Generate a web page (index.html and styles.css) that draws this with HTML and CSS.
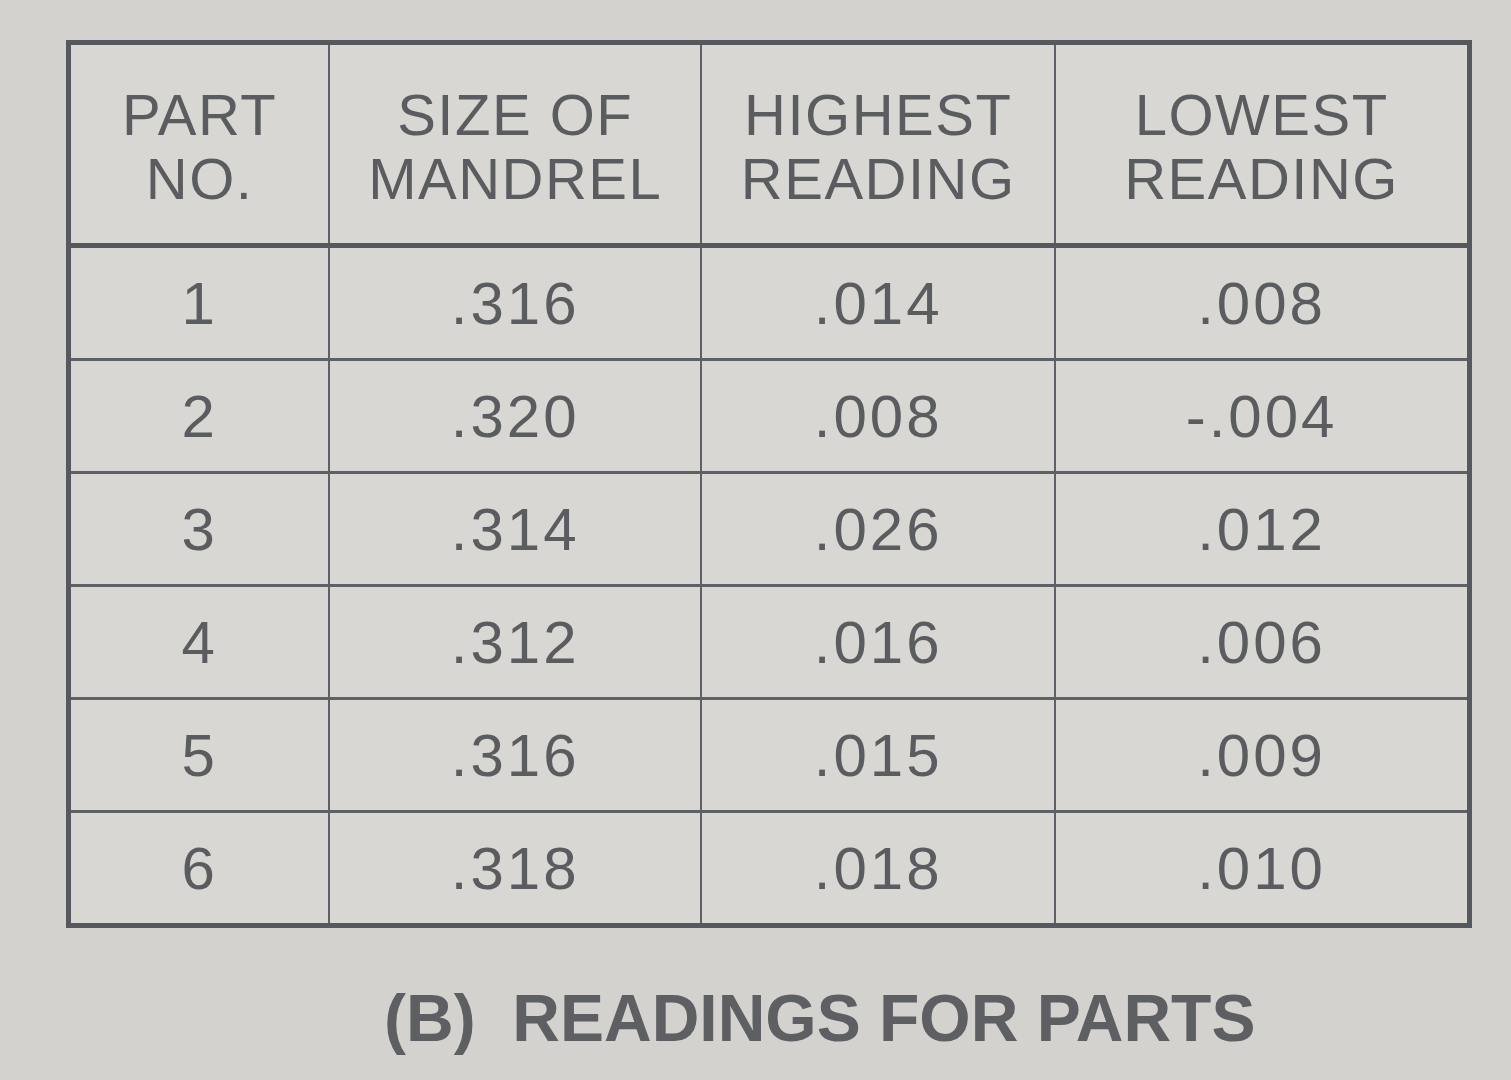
FILE: index.html
```html
<!DOCTYPE html>
<html lang="en">
<head>
<meta charset="utf-8">
<title>Readings for Parts</title>
<link rel="stylesheet" href="styles.css">
</head>
<body>
<main class="page">
  <table class="readings">
    <colgroup>
      <col class="c1"><col class="c2"><col class="c3"><col class="c4">
    </colgroup>
    <thead>
      <tr>
        <th>PART<br>NO.</th>
        <th>SIZE OF<br>MANDREL</th>
        <th>HIGHEST<br>READING</th>
        <th>LOWEST<br>READING</th>
      </tr>
    </thead>
    <tbody>
      <tr><td>1</td><td>.316</td><td>.014</td><td>.008</td></tr>
      <tr><td>2</td><td>.320</td><td>.008</td><td>-.004</td></tr>
      <tr><td>3</td><td>.314</td><td>.026</td><td>.012</td></tr>
      <tr><td>4</td><td>.312</td><td>.016</td><td>.006</td></tr>
      <tr><td>5</td><td>.316</td><td>.015</td><td>.009</td></tr>
      <tr><td>6</td><td>.318</td><td>.018</td><td>.010</td></tr>
    </tbody>
  </table>
  <p class="caption">(B)&nbsp; READINGS FOR PARTS</p>
</main>
</body>
</html>
```
FILE: styles.css
```css
html, body {
  margin: 0;
  padding: 0;
  background: #d3d2cf;
}
body {
  font-family: "Liberation Sans", Arial, sans-serif;
  color: #5a5c5f;
  width: 1511px;
  height: 1080px;
  overflow: hidden;
}
.page {
  padding: 40px 0 0 66px;
}
.readings {
  width: 1406px;
  border-collapse: collapse;
  border: 5px solid #55595e;
  background: #d8d7d4;
}
.readings .c1 { width: 262px; }
.readings .c2 { width: 373px; }
.readings .c3 { width: 355px; }
.readings .c4 { width: 416px; }
.readings th {
  height: 192px;
  font-weight: normal;
  font-size: 58px;
  line-height: 64px;
  letter-spacing: 1.5px;
  border-left: 2px solid #5d6166;
  border-bottom: 5px solid #55595e;
  text-align: center;
  vertical-align: middle;
  padding: 6px 0 0;
}
.readings td {
  height: 110px;
  font-size: 60px;
  letter-spacing: 3px;
  text-align: center;
  vertical-align: middle;
  border-left: 2px solid #5d6166;
  border-top: 3px solid #5d6166;
  padding: 0;
}
.readings th:first-child,
.readings td:first-child {
  border-left: none;
}
.readings tbody tr:first-child td {
  border-top: none;
}
.caption {
  margin: 52px 0 0 318px;
  font-size: 66px;
  font-weight: bold;
  letter-spacing: 0;
  color: #5e5f62;
}
```
